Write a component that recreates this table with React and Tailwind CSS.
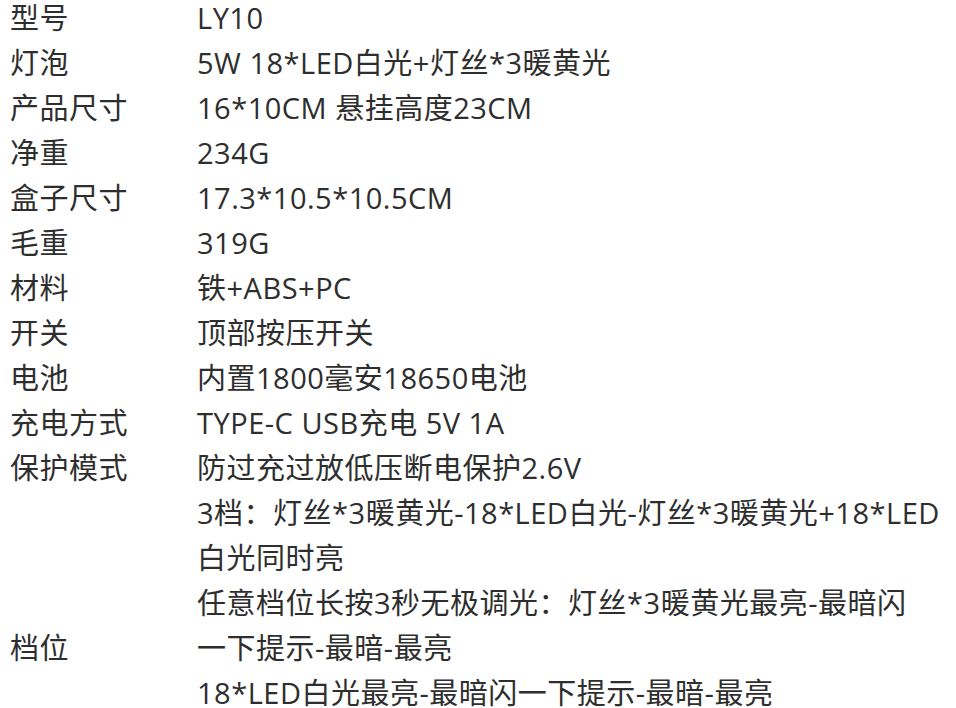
import React from 'react'

const rows = [
  { label: '型号', lines: ['LY10'] },
  { label: '灯泡', lines: ['5W 18*LED白光+灯丝*3暖黄光'] },
  { label: '产品尺寸', lines: ['16*10CM 悬挂高度23CM'] },
  { label: '净重', lines: ['234G'] },
  { label: '盒子尺寸', lines: ['17.3*10.5*10.5CM'] },
  { label: '毛重', lines: ['319G'] },
  { label: '材料', lines: ['铁+ABS+PC'] },
  { label: '开关', lines: ['顶部按压开关'] },
  { label: '电池', lines: ['内置1800毫安18650电池'] },
  { label: '充电方式', lines: ['TYPE-C USB充电 5V 1A'] },
  { label: '保护模式', lines: ['防过充过放低压断电保护2.6V'] },
  {
    label: '档位',
    offset: 3,
    lines: [
      '3档：灯丝*3暖黄光-18*LED白光-灯丝*3暖黄光+18*LED',
      '白光同时亮',
      '任意档位长按3秒无极调光：灯丝*3暖黄光最亮-最暗闪',
      '一下提示-最暗-最亮',
      '18*LED白光最亮-最暗闪一下提示-最暗-最亮',
    ],
  },
]

export default function App() {
  return (
    <div className="h-[708px] overflow-hidden bg-white">
      <div
        className="mt-[-5px] pl-[10px] text-[29px] leading-[45px] tracking-[0.5px] text-[#2e2e2e]"
        style={{ fontFamily: '"Open Sans", "Noto Sans CJK SC", sans-serif' }}
      >
        {rows.map((row) => (
          <div key={row.label} className="flex">
            <div className={`w-[187px] shrink-0 ${row.offset ? 'pt-[135px]' : ''}`}>{row.label}</div>
            <div className="flex-1 whitespace-nowrap">
              {row.lines.map((line, i) => (
                <div key={i}>{line}</div>
              ))}
            </div>
          </div>
        ))}
      </div>
    </div>
  )
}
